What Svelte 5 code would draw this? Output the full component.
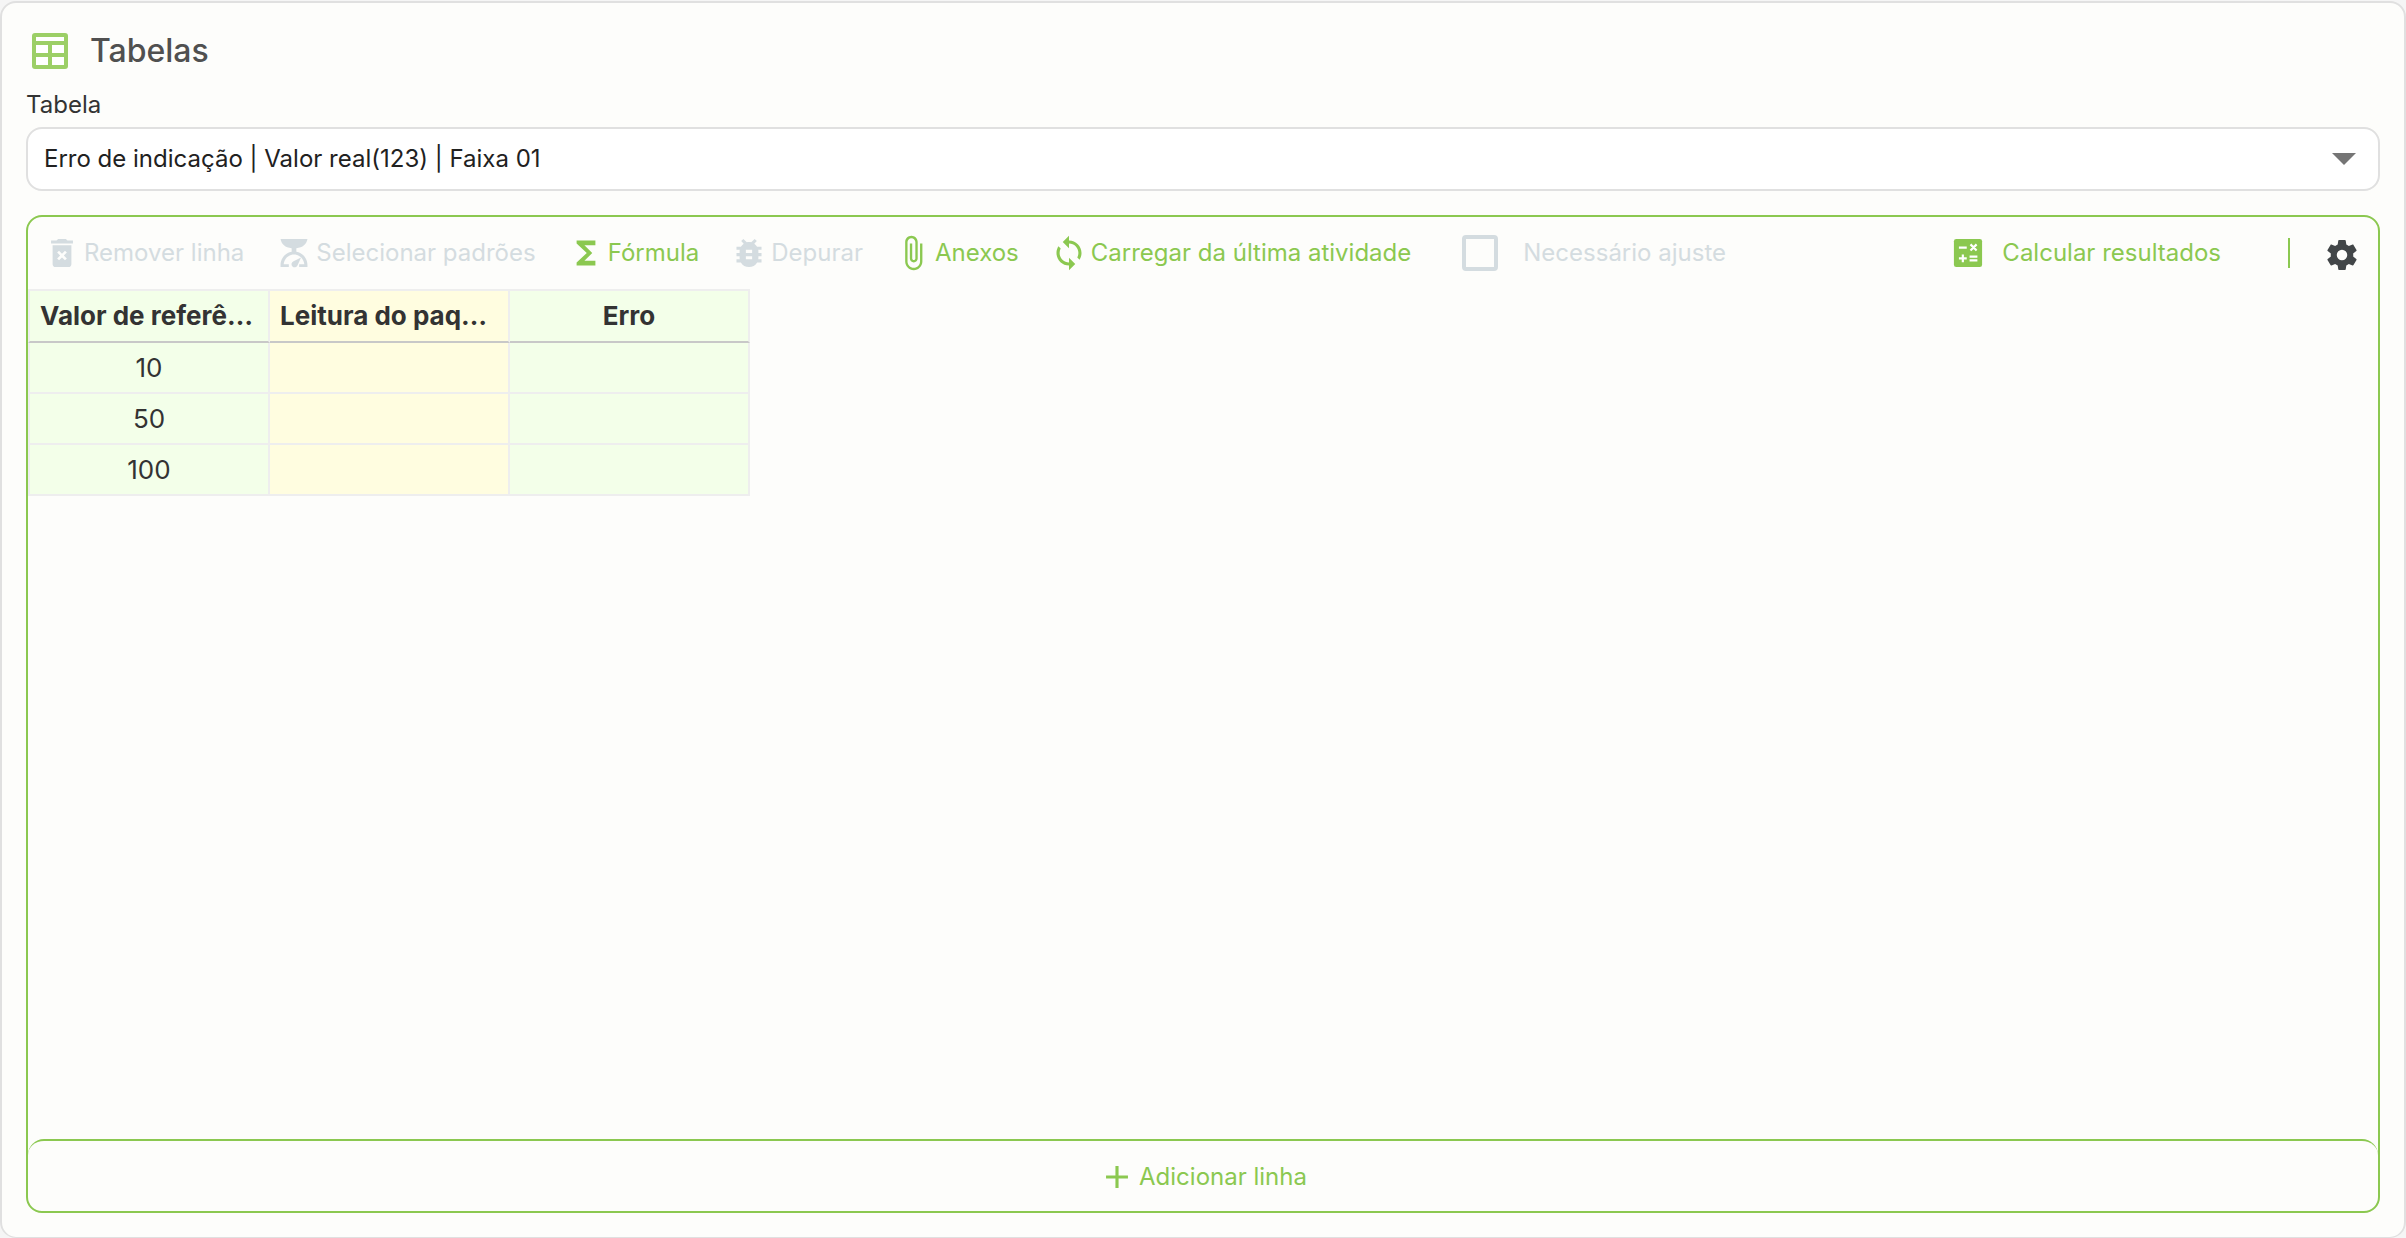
<script>
  const icons = {
    remove:
      'M6 19a2 2 0 0 0 2 2h8a2 2 0 0 0 2-2V7H6v12ZM8.9 11.7l1.2-1.2 1.9 1.9 1.9-1.9 1.2 1.2-1.9 1.9 1.9 1.9-1.2 1.2-1.9-1.9-1.9 1.9-1.2-1.2 1.9-1.9-1.9-1.9ZM15.5 4l-1-1h-5l-1 1H5v2h14V4h-3.5Z',
    scale:
      'M3.4 3h17.2c-.5 3.3-3 5.5-7.1 5.9v2.3c4.200.8 7.100 4.300 7.100 8.500v1.300h-5.300v-1.800h3.300c-.4-3.600-3.100-6.300-6.600-6.300s-6.200 2.700-6.600 6.300h3.300V21H3.400v-1.300c0-4.200 2.900-7.700 7.100-8.500V8.900C6.400 8.500 3.900 6.300 3.400 3ZM16.500 14.800l-2.200 5a2 2 0 1 1-2.600-2.500l4.800-2.500Z',
    sum: 'M18 4H6v2l6.5 6L6 18v2h12v-3h-7l5-5-5-5h7z',
    bug: 'M20 8h-2.81c-.45-.78-1.07-1.45-1.82-1.96L17 4.41 15.59 3l-2.17 2.17C12.96 5.06 12.49 5 12 5c-.49 0-.96.06-1.41.17L8.41 3 7 4.41l1.62 1.63C7.88 6.55 7.26 7.22 6.81 8H4v2h2.09c-.05.33-.09.66-.09 1v1H4v2h2v1c0 .34.04.67.09 1H4v2h2.81c1.04 1.79 2.97 3 5.19 3s4.15-1.21 5.19-3H20v-2h-2.09c.05-.33.09-.66.09-1v-1h2v-2h-2v-1c0-.34-.04-.67-.09-1H20V8zm-6 8h-4v-2h4v2zm0-4h-4v-2h4v2z',
    clip: 'M16.5 6v11.5c0 2.21-1.79 4-4 4s-4-1.79-4-4V5c0-1.38 1.12-2.5 2.5-2.5s2.5 1.12 2.5 2.5v10.5c0 .55-.45 1-1 1s-1-.45-1-1V6H10v9.5c0 1.38 1.12 2.5 2.5 2.5s2.5-1.12 2.5-2.5V5c0-2.21-1.79-4-4-4S7 2.79 7 5v12.5c0 3.04 2.46 5.5 5.5 5.5s5.5-2.46 5.5-5.5V6h-1.5z',
    sync: 'M12 4V1L8 5l4 4V6c3.31 0 6 2.69 6 6 0 1.01-.25 1.97-.7 2.8l1.46 1.46C19.54 15.03 20 13.57 20 12c0-4.42-3.58-8-8-8zm0 14c-3.31 0-6-2.69-6-6 0-1.01.25-1.97.7-2.8L5.24 7.74C4.46 8.97 4 10.43 4 12c0 4.42 3.58 8 8 8v3l4-4-4-4v3z',
    plus: 'M19 13h-6v6h-2v-6H5v-2h6V5h2v6h6z',
    gear: 'M12,15.5A3.5,3.5 0 0,1 8.5,12A3.5,3.5 0 0,1 12,8.5A3.5,3.5 0 0,1 15.5,12A3.5,3.5 0 0,1 12,15.5M19.43,12.97C19.47,12.65 19.5,12.33 19.5,12C19.5,11.67 19.47,11.34 19.43,11L21.54,9.37C21.73,9.22 21.78,8.95 21.66,8.73L19.66,5.27C19.54,5.05 19.27,4.96 19.05,5.05L16.56,6.05C16.04,5.66 15.5,5.32 14.87,5.07L14.5,2.42C14.46,2.18 14.25,2 14,2H10C9.75,2 9.54,2.18 9.5,2.42L9.13,5.07C8.5,5.32 7.96,5.66 7.44,6.05L4.95,5.05C4.73,4.96 4.46,5.05 4.34,5.27L2.34,8.73C2.21,8.95 2.27,9.22 2.46,9.37L4.57,11C4.53,11.34 4.5,11.67 4.5,12C4.5,12.33 4.53,12.65 4.57,12.97L2.46,14.63C2.27,14.78 2.21,15.05 2.34,15.27L4.34,18.73C4.46,18.95 4.73,19.03 4.95,18.95L7.44,17.94C7.96,18.34 8.5,18.68 9.13,18.93L9.5,21.58C9.54,21.82 9.75,22 10,22H14C14.25,22 14.46,21.82 14.5,21.58L14.87,18.93C15.5,18.67 16.04,18.34 16.56,17.94L19.05,18.95C19.27,19.03 19.54,18.95 19.66,18.73L21.66,15.27C21.78,15.05 21.73,14.78 21.54,14.63L19.43,12.97Z',
  };

  const actions = [
    { label: 'Remover linha', icon: 'remove', disabled: true },
    { label: 'Selecionar padrões', icon: 'scale', disabled: true },
    { label: 'Fórmula', icon: 'sum', disabled: false },
    { label: 'Depurar', icon: 'bug', disabled: true },
    { label: 'Anexos', icon: 'clip', disabled: false },
    { label: 'Carregar da última atividade', icon: 'sync', disabled: false },
  ];

  const columns = ['Valor de referência', 'Leitura do paquímetro', 'Erro'];

  let rows = $state([
    ['10', '', ''],
    ['50', '', ''],
    ['100', '', ''],
  ]);

  function addRow() {
    rows.push(['', '', '']);
  }
</script>

{#snippet glyph(name)}
  <svg class="icon" viewBox="0.5 0.5 23 23" aria-hidden="true"><path fill-rule="evenodd" d={icons[name]} /></svg>
{/snippet}

<main>
  <section class="card">
    <header>
      <svg class="title-icon" viewBox="0 0 36 36" aria-hidden="true">
        <rect class="frame" width="36" height="36" rx="3" />
        <path class="cells" d="M4 4h28v4H4zM4 12h12v8H4zM20 12h12v8H20zM4 24h12v8H4zM20 24h12v8H20z" />
      </svg>
      <h1>Tabelas</h1>
    </header>

    <label class="field-label" for="tabela">Tabela</label>
    <div class="select-wrap">
      <select id="tabela">
        <option>Erro de indicação | Valor real(123) | Faixa 01</option>
      </select>
      <svg class="arrow" viewBox="0 0 24 12" aria-hidden="true"><path d="M0 0h24L12 12z" /></svg>
    </div>

    <div class="panel">
      <div class="toolbar">
        {#each actions as action}
          <button class="action" disabled={action.disabled}>
            {@render glyph(action.icon)}
            {action.label}
          </button>
        {/each}
        <label class="check">
          <input type="checkbox" disabled />
          Necessário ajuste
        </label>
        <button class="action calculate">
          <svg class="icon" viewBox="0.5 0.5 23 23" aria-hidden="true">
            <rect x="3" y="3" width="18" height="18" rx="1.500" />
            <path class="ops" d="M6.200 8.600h5M13.600 6.500l3.900 3.900M17.500 6.500l-3.900 3.900M6.200 15.400h5M8.700 12.900v5M13 14.300h5M13 16.700h5" />
          </svg>
          Calcular resultados
        </button>
        <span class="divider"></span>
        <button class="action settings" aria-label="Configurações">
          <svg class="icon" viewBox="0 0 24 24" aria-hidden="true"><path fill-rule="evenodd" d={icons.gear} /></svg>
        </button>
      </div>

      <div class="grid">
        <table>
          <thead>
            <tr>
              {#each columns as column}<th scope="col">{column}</th>{/each}
            </tr>
          </thead>
          <tbody>
            {#each rows as row}
              <tr>
                {#each row as cell}<td>{cell}</td>{/each}
              </tr>
            {/each}
          </tbody>
        </table>
      </div>

      <button class="action add" onclick={addRow}>
        {@render glyph('plus')}
        Adicionar linha
      </button>
    </div>
  </section>
</main>

<style>
  :global(body) {
    margin: 0;
    background: #f5f5f5;
  }

  main,
  main * {
    box-sizing: border-box;
  }

  main {
    display: flex;
    min-height: 100vh;
    padding-top: 1px;
    font-family: Inter, 'Liberation Sans', sans-serif;
    font-size: 24px;
    line-height: 30px;
    color: #333;
  }

  .card {
    flex: 1;
    min-width: 0;
    display: flex;
    flex-direction: column;
    padding: 30px 24px 24px;
    border: 2px solid #e0e0e0;
    border-bottom-width: 1px;
    border-radius: 16px;
    background: #fdfdfb;
  }

  header {
    display: flex;
    align-items: center;
    gap: 22px;
    height: 36px;
    padding-left: 6px;
  }

  .title-icon {
    width: 36px;
    height: 36px;
  }

  .frame {
    fill: #9ccf66;
  }

  .cells {
    fill: #fff;
  }

  h1 {
    margin: 0;
    font-size: 32px;
    line-height: 38px;
    font-weight: 500;
    color: #505050;
  }

  .field-label {
    margin: 21px 0 7px;
  }

  .select-wrap {
    position: relative;
  }

  select {
    display: block;
    width: 100%;
    height: 64px;
    padding: 0 64px 0 16px;
    border: 2px solid #e0e0e0;
    border-radius: 16px;
    appearance: none;
    background: #fff;
    color: #212121;
    font: inherit;
  }

  .arrow {
    position: absolute;
    top: 26px;
    right: 24px;
    width: 24px;
    height: 12px;
    fill: #757575;
    pointer-events: none;
  }

  .panel {
    flex: 1;
    display: flex;
    flex-direction: column;
    margin-top: 24px;
    border: 2px solid #8bc850;
    border-radius: 16px;
  }

  .toolbar {
    display: flex;
    align-items: center;
    gap: 32px;
    height: 72px;
    padding: 0 18px 0 16px;
  }

  .action {
    display: inline-flex;
    align-items: center;
    gap: 4px;
    padding: 0;
    border: 0;
    background: none;
    color: #8bc850;
    font: inherit;
    white-space: nowrap;
  }

  .action:disabled,
  .check {
    color: #d4dce0;
  }

  .icon {
    flex: none;
    width: 36px;
    height: 36px;
    fill: currentColor;
  }

  .ops {
    fill: none;
    stroke: #fff;
    stroke-width: 1.4;
  }

  .check {
    display: inline-flex;
    align-items: center;
    gap: 25px;
    margin-left: 19px;
    white-space: nowrap;
  }

  .check input {
    width: 36px;
    height: 36px;
    margin: 0;
    border: 4px solid #d4dce0;
    border-radius: 4px;
    appearance: none;
  }

  .calculate {
    gap: 16px;
    margin-left: auto;
  }

  .divider {
    width: 2px;
    height: 30px;
    margin: 0 2px 0 35px;
    background: #8bc850;
  }

  .settings {
    padding-top: 4px;
    color: #424648;
  }

  .grid {
    flex: 1;
  }

  table {
    width: 722px;
    table-layout: fixed;
    border-collapse: separate;
    border-spacing: 0;
    font-size: 26px;
  }

  th,
  td {
    width: 240px;
    height: 51px;
    padding: 0 10px;
    overflow: hidden;
    border: 0 solid #eee;
    border-width: 0 2px 2px 0;
    background: #f3ffe9;
    text-align: center;
    text-overflow: ellipsis;
    white-space: nowrap;
  }

  th:first-child,
  td:first-child {
    width: 242px;
    border-left-width: 2px;
  }

  th:nth-child(2),
  td:nth-child(2) {
    background: #fffde0;
  }

  th {
    height: 54px;
    border-top-width: 2px;
    border-bottom-color: #c8c8c8;
    font-weight: 700;
  }

  .add {
    justify-content: center;
    height: 72px;
    padding-top: 2px;
    border-top: 2px solid #8bc850;
    border-radius: 16px;
  }
</style>
